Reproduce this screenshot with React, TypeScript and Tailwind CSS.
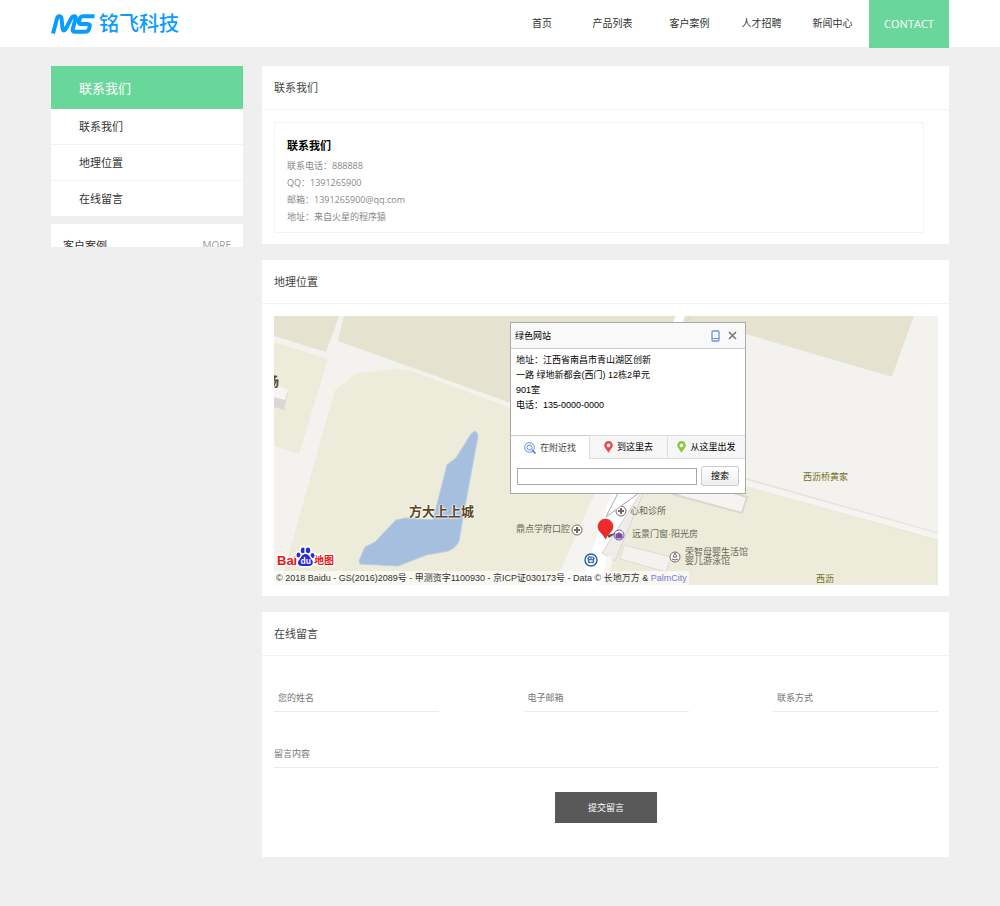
import { BusFront } from "lucide-react";
import type { ReactNode } from "react";

const NAV = ["首页", "产品列表", "客户案例", "人才招聘", "新闻中心"];
const SIDE = ["联系我们", "地理位置", "在线留言"];
const INFO = [
  "联系电话：888888",
  "QQ：1391265900",
  "邮箱：1391265900@qq.com",
  "地址：来自火星的程序猿",
];
const FIELDS = [
  { id: "name", label: "您的姓名" },
  { id: "email", label: "电子邮箱" },
  { id: "contact", label: "联系方式" },
];

function Logo() {
  return (
    <a href="#" className="flex items-center gap-1 text-[#0a9bff]" aria-label="铭飞科技">
      <svg width="44" height="20" viewBox="0 0 44 20" fill="none" stroke="currentColor" strokeWidth="4" strokeLinejoin="round">
        <path d="M2 19.500 6 4.500Q6.800 2 8.600 2.200 10.300 2.400 10.500 4.200L11.500 14Q11.900 17 13.500 16.200 14.300 15.800 14.800 14.800L20.300 4.200Q21.500 2 23.300 2.200 25.200 2.400 24.600 4.800L21.900 14.400Q21 17.800 23.800 17.800H34Q37.200 17.800 38 15L38.600 12.800Q39.400 10 36.600 10H30Q27.400 10 28 7.600L28.600 5.200Q29.400 2.200 32.200 2.200H43.500" />
      </svg>
      <span className="text-xl leading-6 font-medium">铭飞科技</span>
    </a>
  );
}

function Card({ title, children }: { title: string; children: ReactNode }) {
  return (
    <section className="bg-white">
      <h2 className="h-11 border-b border-[#f3f3f3] px-3 text-[11px] leading-[44px] text-[#444]">{title}</h2>
      {children}
    </section>
  );
}

function MapDrawing() {
  return (
    <svg className="absolute inset-0 h-full w-full" viewBox="0 0 665 269" preserveAspectRatio="xMinYMin slice" aria-hidden="true">
      <rect width="665" height="269" fill="#f3f2ee" />
      <path d="M0 0H65L52 36 0 20Z" fill="#e5e2cf" />
      <path d="M70 0H640L618 61 465 16V110L237 87 64 25Z" fill="#e5e2cf" />
      <path d="M0 26 54 43 25 138 0 130Z" fill="#edecda" />
      <path d="M61 74 84 57 123 53 135 54 237 92 480 164 665 225V269H6Z" fill="#edecda" />
      <path d="M465 17 618 61 665 40V223L465 163Z" fill="#f3f2ee" />
      <path d="M618 61 640 0H665V120H600Z" fill="#f3f2ee" />
      <path d="M403 8 407-2" stroke="#fff" strokeWidth="9" />
      <path d="M412 8 416-2" stroke="#d8d6cb" strokeWidth="1" />
      <path d="M465 164 665 221" stroke="#e4e2d9" strokeWidth="8" />
      <path d="M465 165 665 221" stroke="#f5f4f1" strokeWidth="6" />
      <path d="M0 72 14 77 10 94 0 91Z" fill="#d9d8d7" />
      <path d="M0 68 14 74 11 84 0 81Z" fill="#f7f5f1" />
      <path d="M85 245 91 231 101 226 122 204 132 202 159 204 173 149 182 142 197 118Q203 112 204 120L191 190 185 225Q182 232 174 235L152 239 124 250 86 248Z" fill="#a7bfdf" stroke="#b9cbe2" />
      <path d="M333 150 280 269H317L370 150Z" fill="#f5f4f0" />
      <path d="M347 150 306 269H323L367 175Z" fill="#fff" />
      <path d="M368 175 328 237 341 245 369 178Z" fill="#efede9" stroke="#d8d5d0" strokeWidth="1" />
      <path d="M398 178 468 197 473 181 445 173Z" fill="#f5f4f1" stroke="#d9d7d0" strokeWidth="2" />
      <path d="M350 229 397 241 392 256 346 243Z" fill="#f3f2ed" stroke="#dcdad2" strokeWidth="1" />
      <path d="M335 240Q336 252 327 269" fill="none" stroke="#f7f6f3" strokeWidth="6" />
      <g fill="#fff" stroke="#77675f">
        <circle cx="347" cy="195" r="5" /><path d="M347 192v6M344 195h6" strokeWidth="2" />
        <circle cx="303" cy="214" r="5" /><path d="M303 211v6M300 214h6" strokeWidth="2" />
        <circle cx="401" cy="241" r="5" /><path d="M398 243q3 2 6 0M401 237l-2 4h4z" />
      </g>
      <path d="M344 177 332 201 365 177Z" fill="#fff" stroke="#a9a9a9" />
      <circle cx="345" cy="219" r="5" fill="#fff" stroke="#7650a8" />
      <path d="M342 218h6v4h-6zM343.500 218q1.500-3 3 0" fill="#7650a8" stroke="#7650a8" />
      <path d="M333 219 342 217 335 222Z" fill="#555" />
      <path d="M331.500 223C329 217 324 216 324 210.500A7.500 7.500 0 0 1 339 210.500C339 216 334 217 331.500 223Z" fill="#ee2a2c" stroke="#c62225" strokeWidth=".6" />
      <circle cx="317" cy="244" r="6" fill="#fff" stroke="#285da5" strokeWidth="1.400" />
    </svg>
  );
}

function BaiduLogo() {
  return (
    <svg className="absolute bottom-4 left-0.5" width="60" height="24" viewBox="0 0 60 24" role="img" aria-label="百度地图" fontFamily="Liberation Sans, Noto Sans CJK SC, sans-serif" fontWeight="700" strokeLinejoin="round">
      <g stroke="#fff" strokeWidth="3" paintOrder="stroke">
        <text x="1" y="20" fontSize="13" fill="#ea1414">Bai</text>
        <text x="38" y="19" fontSize="10" fill="#ea1414">地图</text>
        <g fill="#2529d8">
          <ellipse cx="22.500" cy="10" rx="2" ry="2.600" />
          <ellipse cx="27" cy="5.500" rx="2.200" ry="2.900" />
          <ellipse cx="32" cy="5.500" rx="2.200" ry="2.900" />
          <ellipse cx="36.500" cy="10.500" rx="2" ry="2.600" />
          <path d="M29.500 9C33 9 34 13 36 15 38 18 36 21 33 21H26C22 21 21 18 23 15 25 13 26 9 29.500 9Z" />
        </g>
      </g>
      <text x="24.500" y="19" fontSize="8.500" fill="#fff">du</text>
    </svg>
  );
}

function Pin({ className }: { className: string }) {
  return (
    <svg className={className} width="9" height="12" viewBox="0 0 9 12" aria-hidden="true">
      <path fillRule="evenodd" fill="currentColor" d="M4.500 0A4.300 4.300 0 0 1 8.800 4.300C8.800 7 6 8.500 4.500 12 3 8.500.2 7 .2 4.300A4.300 4.300 0 0 1 4.500 0ZM4.500 2.500A1.900 1.900 0 1 0 4.500 6.300 1.900 1.900 0 0 0 4.500 2.500Z" />
    </svg>
  );
}

function InfoWindow() {
  return (
    <div className="absolute top-[6px] left-[236px] w-[236px] border border-[#aaa] bg-white font-['Liberation_Sans','Noto_Sans_CJK_SC',sans-serif] text-[9px] text-black">
      <div className="flex h-[26px] items-center border-b border-[#ccc] bg-[#f9f9f9] px-1">
        <span className="flex-1">绿色网站</span>
        <button type="button" aria-label="发送到手机" className="mr-2 text-[#6a94dc]">
          <svg width="9" height="12" viewBox="0 0 9 12" fill="none" stroke="currentColor">
            <rect x="1" y="1" width="7" height="10" rx="1" strokeWidth="1.300" />
            <path d="M1 8.500h7" />
          </svg>
        </button>
        <button type="button" aria-label="关闭" className="mr-1 text-[#777]">
          <svg width="9" height="9" viewBox="0 0 9 9" stroke="currentColor" strokeWidth="1.600"><path d="M1 1l7 7M8 1 1 8" /></svg>
        </button>
      </div>
      <div className="h-[86px] px-[5px] pt-1 leading-[15px]">
        <p className="w-[150px]">地址：江西省南昌市青山湖区创新<br />一路 绿地新都会(西门) 12栋2单元<br />901室</p>
        <p>电话：135-0000-0000</p>
      </div>
      <div className="grid h-6 grid-cols-3">
        <button type="button" className="flex items-center justify-center gap-1 border-t border-[#ccc] text-[#444]">
          <svg width="12" height="12" viewBox="0 0 12 12" fill="none" stroke="#5b8bdc" aria-hidden="true">
            <circle cx="5.500" cy="5.500" r="4.800" /><circle cx="5.500" cy="5.500" r="2.500" /><path d="M8 8l3.500 3.500" strokeWidth="1.800" />
          </svg>
          在附近找
        </button>
        <button type="button" className="flex items-center justify-center gap-1 border border-r-0 border-[#ddd] bg-[#f6f6f6]"><Pin className="text-[#e84a4a]" />到这里去</button>
        <button type="button" className="flex items-center justify-center gap-1 border border-r-0 border-[#ddd] bg-[#f6f6f6]"><Pin className="text-[#8cc63f]" />从这里出发</button>
      </div>
      <div className="flex h-[34px] items-center gap-1 px-1.5">
        <input aria-label="搜索附近" className="h-[17px] min-w-0 flex-1 border border-[#a5abb0]" />
        <button type="button" className="h-5 w-[38px] rounded-xs border border-[#ccc] bg-linear-to-b from-white to-[#eee]">搜索</button>
      </div>
    </div>
  );
}

function MapPanel() {
  return (
    <div className="relative h-[269px] overflow-hidden font-['Liberation_Sans','Noto_Sans_CJK_SC',sans-serif] text-[9px] leading-3 text-[#665]">
      <MapDrawing />
      <span className="absolute top-[188px] left-[135px] text-[13px] leading-4 font-bold text-[#5d4721] [text-shadow:0_0_2px_#fff,0_0_2px_#fff,0_0_2px_#fff]">方大上上城</span>
      <span className="absolute top-[58px] -left-2 text-[13px] leading-4 font-bold text-[#5d4721]">场</span>
      <span className="absolute top-[155px] left-[529px] text-[#737021]">西沥桥黄家</span>
      <span className="absolute top-[257px] left-[542px] text-[#737021]">西沥</span>
      <span className="absolute top-[189px] left-[356px]">心和诊所</span>
      <span className="absolute top-[207px] left-[242px]">鼎点学府口腔</span>
      <span className="absolute top-[212px] left-[358px]">远景门窗·阳光房</span>
      <span className="absolute top-[232px] left-[411px] leading-[9px]">荣智母婴生活馆<br />婴儿游泳馆</span>
      <BusFront className="absolute top-[240px] left-[313px] size-2 text-[#285da5]" strokeWidth={3} />
      <BaiduLogo />
      <InfoWindow />
      <p className="absolute bottom-0 left-0 bg-white/60 px-0.5 text-[9px] leading-[14px] whitespace-nowrap text-[#333]">
        © 2018 Baidu - GS(2016)2089号 - 甲测资字1100930 - 京ICP证030173号 - Data © 长地万方 &amp; <a href="#" className="text-[#7777dd]">PalmCity</a>
      </p>
    </div>
  );
}

export default function App() {
  return (
    <div className="min-h-screen bg-[#efefef] font-['Open_Sans','Noto_Sans_CJK_SC',sans-serif] text-[#333]">
      <header className="h-[47px] bg-white">
        <div className="mx-auto flex w-full max-w-[898px] items-start justify-between">
          <div className="flex h-[47px] items-center"><Logo /></div>
          <nav className="grid grid-cols-[62px_79px_75px_69px_73px_80px] text-center text-[10px] leading-[47px]">
            {NAV.map((n) => <a key={n} href="#">{n}</a>)}
            <a href="#" className="h-12 bg-[#6ad79a] text-[11px] text-white">CONTACT</a>
          </nav>
        </div>
      </header>

      <div className="mx-auto flex w-full max-w-[898px] items-start gap-[19px] pt-[19px] pb-12">
        <aside className="w-[192px] shrink-0">
          <h2 className="h-[43px] bg-[#6ad79a] px-7 text-[13px] leading-[44px] text-white">联系我们</h2>
          <ul className="divide-y divide-[#f3f3f3] bg-white">
            {SIDE.map((s) => (
              <li key={s}><a href="#" className="block px-7 text-[11px] leading-[35px]">{s}</a></li>
            ))}
          </ul>
          <div className="mt-2 flex h-[23px] items-start justify-between overflow-hidden bg-white px-3 leading-[43px]">
            <span className="text-[11px]">客户案例</span>
            <a href="#" className="text-[10px] text-[#999]">MORE</a>
          </div>
        </aside>

        <main className="flex min-w-0 flex-1 flex-col gap-4">
          <Card title="联系我们">
            <div className="pt-3 pr-[11px] pb-[11px] pl-3">
              <div className="mr-[14px] border border-[#f3f3f3] px-3 pt-3 pb-[7px]">
                <h3 className="text-[11px] leading-[22px] font-bold text-black">联系我们</h3>
                {INFO.map((t) => <p key={t} className="text-[9px] leading-[17px] text-[#888]">{t}</p>)}
              </div>
            </div>
          </Card>
          <Card title="地理位置">
            <div className="pt-3 pr-[11px] pb-[11px] pl-3"><MapPanel /></div>
          </Card>
          <Card title="在线留言">
            <form className="pt-7 pr-[11px] pb-[34px] pl-3 text-[9px]">
              <div className="flex justify-between gap-5">
                {FIELDS.map((f) => (
                  <input key={f.id} id={f.id} aria-label={f.label} placeholder={f.label} className="h-7 w-[165px] min-w-0 border-b border-[#eaeaea] px-1 placeholder:text-[#757575]" />
                ))}
              </div>
              <textarea aria-label="留言内容" placeholder="留言内容" rows={1} className="mt-7 block h-7 w-full resize-none overflow-hidden border-b border-[#eaeaea] leading-[27px] placeholder:text-[#757575]" />
              <button type="button" className="mx-auto mt-6 block h-[31px] w-[102px] bg-[#595959] text-white">提交留言</button>
            </form>
          </Card>
        </main>
      </div>
    </div>
  );
}
